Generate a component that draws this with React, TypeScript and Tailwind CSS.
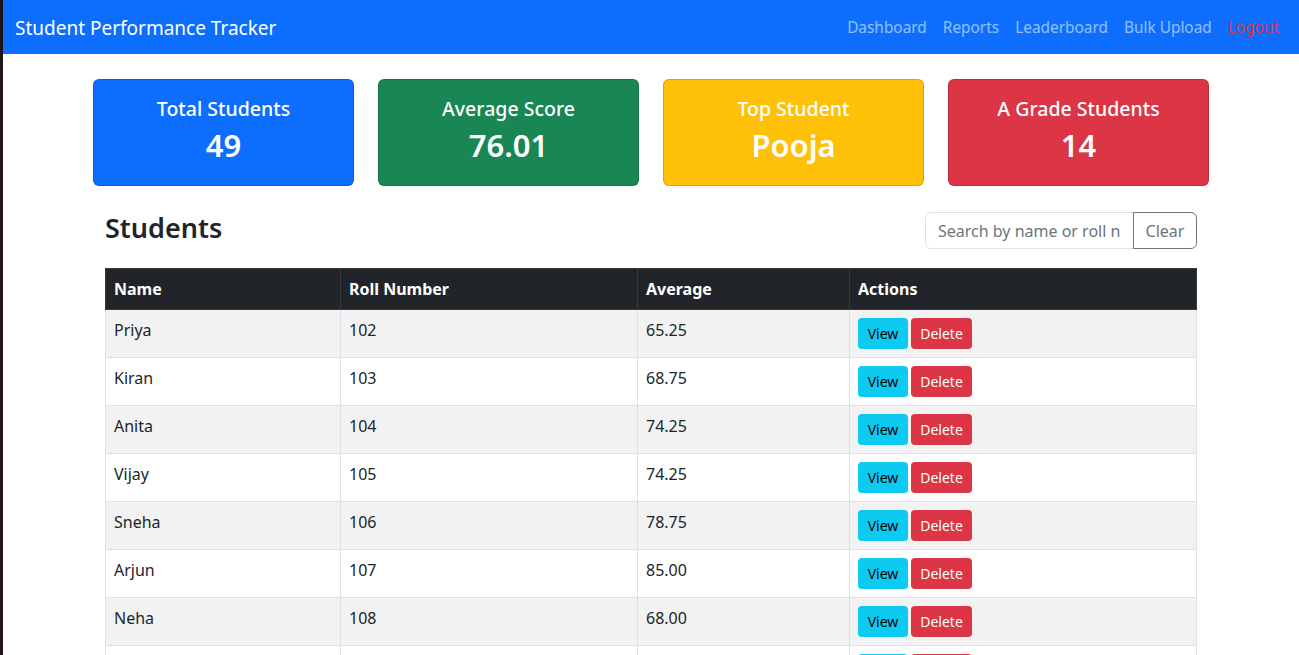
import { useState } from 'react';

const students = [
  { name: 'Priya', roll: '102', avg: '65.25' },
  { name: 'Kiran', roll: '103', avg: '68.75' },
  { name: 'Anita', roll: '104', avg: '74.25' },
  { name: 'Vijay', roll: '105', avg: '74.25' },
  { name: 'Sneha', roll: '106', avg: '78.75' },
  { name: 'Arjun', roll: '107', avg: '85.00' },
  { name: 'Neha', roll: '108', avg: '68.00' },
  { name: 'Rahul', roll: '109', avg: '81.50' },
  { name: 'Meena', roll: '110', avg: '72.00' },
];

const stats = [
  { title: 'Total Students', value: '49', bg: 'bg-[#0d6efd]' },
  { title: 'Average Score', value: '76.01', bg: 'bg-[#198754]' },
  { title: 'Top Student', value: 'Pooja', bg: 'bg-[#ffc107]' },
  { title: 'A Grade Students', value: '14', bg: 'bg-[#dc3545]' },
];

export default function App() {
  const [query, setQuery] = useState('');

  const rows = students.filter(
    (s) => s.name.toLowerCase().includes(query.toLowerCase()) || s.roll.includes(query)
  );

  return (
    <div className="flex min-h-screen font-['Noto_Sans','Liberation_Sans',sans-serif] text-[#212529] text-[16px]">
      {/* window edge */}
      <div className="w-[3px] shrink-0 bg-[#1f1419]" />

      <div className="flex-1 bg-white">
        {/* Navbar */}
        <nav className="h-[54px] bg-[#0d6efd] flex items-center justify-between pl-[12px] pr-[12px] pt-[2px]">
          <span className="text-[19px] text-white leading-[30px]">Student Performance Tracker</span>
          <div className="flex items-center text-[15.4px]">
            <a className="px-2 text-white/55">Dashboard</a>
            <a className="px-2 text-white/55">Reports</a>
            <a className="px-2 text-white/55">Leaderboard</a>
            <a className="px-2 text-white/55">Bulk Upload</a>
            <a className="px-2 text-[#dc3545]">Logout</a>
          </div>
        </nav>

        <div className="w-[1116px] mx-auto">
          {/* Stat cards */}
          <div className="grid grid-cols-4 gap-6 mt-[25px]">
            {stats.map((s) => (
              <div
                key={s.title}
                className={`${s.bg} h-[107px] rounded-md border border-black/15 text-white flex flex-col items-center pt-[17px]`}
              >
                <div className="text-[19.5px] font-medium leading-[24px]">{s.title}</div>
                <div className="text-[31px] font-semibold leading-[38px] mt-[5px]">{s.value}</div>
              </div>
            ))}
          </div>

          <div className="px-3">
            {/* Heading + search */}
            <div className="flex items-center justify-between mt-[26px] h-[37px]">
              <h3 className="text-[27px] font-semibold leading-[34px] pb-[5px]">Students</h3>
              <div className="flex">
                <input
                  value={query}
                  onChange={(e) => setQuery(e.target.value)}
                  placeholder="Search by name or roll number"
                  className="w-[209px] h-[37px] border border-[#dee2e6] rounded-l-md px-3 outline-none placeholder:text-[#6c757d]"
                />
                <button
                  onClick={() => setQuery('')}
                  className="w-[64px] h-[37px] -ml-px border border-[#6c757d] text-[#6c757d] rounded-r-md"
                >
                  Clear
                </button>
              </div>
            </div>

            {/* Table */}
            <table className="w-full mt-[19px] border-collapse table-fixed">
              <colgroup>
                <col className="w-[235px]" />
                <col className="w-[297px]" />
                <col className="w-[212px]" />
                <col />
              </colgroup>
              <thead>
                <tr className="bg-[#212529] text-white">
                  <th className="text-left font-bold px-2 py-2 leading-6 border border-[#373b3e]">Name</th>
                  <th className="text-left font-bold px-2 py-2 leading-6 border border-[#373b3e]">Roll Number</th>
                  <th className="text-left font-bold px-2 py-2 leading-6 border border-[#373b3e]">Average</th>
                  <th className="text-left font-bold px-2 py-2 leading-6 border border-[#373b3e]">Actions</th>
                </tr>
              </thead>
              <tbody>
                {rows.map((s, i) => (
                  <tr key={s.roll} className={i % 2 === 0 ? 'bg-[#f2f2f2]' : 'bg-white'}>
                    <td className="align-top px-2 py-2 leading-6 border border-[#dee2e6]">{s.name}</td>
                    <td className="align-top px-2 py-2 leading-6 border border-[#dee2e6]">{s.roll}</td>
                    <td className="align-top px-2 py-2 leading-6 border border-[#dee2e6]">{s.avg}</td>
                    <td className="align-top px-2 py-2 border border-[#dee2e6]">
                      <div className="flex gap-[3px]">
                        <button className="w-[50px] h-[31px] rounded bg-[#0dcaf0] text-black text-[14px]">View</button>
                        <button className="w-[61px] h-[31px] rounded bg-[#dc3545] text-white text-[14px]">Delete</button>
                      </div>
                    </td>
                  </tr>
                ))}
              </tbody>
            </table>
          </div>
        </div>
      </div>
    </div>
  );
}
